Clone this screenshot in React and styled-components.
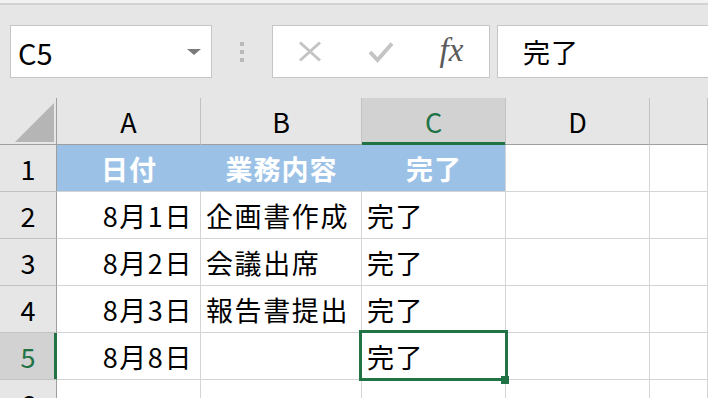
import React from "react";
import styled, { createGlobalStyle, css } from "styled-components";

const Global = createGlobalStyle`
  html, body { margin: 0; padding: 0; background: #e6e6e6; overflow: hidden; }
  body { font-family: "Noto Sans CJK JP", "Noto Sans", sans-serif; }
  * { box-sizing: border-box; }
`;

const GREEN = "#217346";

const Page = styled.div`
  width: 708px;
  height: 398px;
  overflow: hidden;
  display: flex;
  flex-direction: column;
  background: #e6e6e6;
`;

const TopStrip = styled.div`
  height: 5px;
  flex: none;
  background: #f2f2f2;
  border-bottom: 2px solid #d2d2d2;
`;

const Toolbar = styled.div`
  flex: none;
  height: 93px;
  padding-top: 20px;
  display: flex;
  align-items: flex-start;
  background: #e6e6e6;
`;

const NameBox = styled.div`
  margin-left: 10px;
  width: 202px;
  height: 53px;
  background: #fff;
  border: 1px solid #c6c6c6;
  display: flex;
  align-items: center;
  justify-content: space-between;
  padding: 0 10px 0 7px;
  font-size: 29px;
  color: #000;
`;

const Caret = styled.span`
  width: 0;
  height: 0;
  border-left: 7px solid transparent;
  border-right: 7px solid transparent;
  border-top: 6px solid #7b7b7b;
  margin-top: 1px;
`;

const Grip = styled.div`
  width: 60px;
  height: 53px;
  display: flex;
  flex-direction: column;
  align-items: center;
  justify-content: center;
  gap: 4px;
`;

const Dot = styled.span`
  width: 4px;
  height: 4px;
  background: #b9b9b9;
`;

const FxBox = styled.div`
  width: 218px;
  height: 53px;
  background: #fff;
  border: 1px solid #c6c6c6;
  display: flex;
  padding-left: 1px;
`;

const FxSlot = styled.div`
  width: 71px;
  display: flex;
  align-items: center;
  justify-content: center;
`;

const FxText = styled.span`
  font-family: "Liberation Serif", "DejaVu Serif", serif;
  font-style: italic;
  font-size: 33px;
  color: #5a5a5a;
  margin-top: -3px;
`;

const FormulaBar = styled.div`
  margin-left: 7px;
  margin-right: -4px;
  flex: 1;
  height: 53px;
  background: #fff;
  border: 1px solid #c6c6c6;
  display: flex;
  align-items: center;
  padding-left: 25px;
  font-size: 27px;
  letter-spacing: 1px;
  color: #000;
`;

const GridWrap = styled.div`
  position: relative;
  flex: 1;
  background: #fff;
`;

const Grid = styled.div`
  display: grid;
  grid-template-columns: 57px 144px 161px 144px 144px 1fr;
  grid-template-rows: 47px;
  grid-auto-rows: 47px;
  font-size: 27px;
`;

const Cell = styled.div`
  background: ${(p) => (p.$head ? "#9bc2e6" : "#fff")};
  color: ${(p) => (p.$head ? "#fff" : "#000")};
  font-weight: ${(p) => (p.$head ? 700 : 400)};
  letter-spacing: ${(p) => (p.$head ? "1px" : "1.6px")};
  border-right: 1px solid ${(p) => (p.$head ? "#9bc2e6" : "#d4d4d4")};
  border-bottom: 1px solid #d4d4d4;
  display: flex;
  align-items: center;
  white-space: nowrap;
  overflow: hidden;
  justify-content: ${(p) =>
    p.$align === "right" ? "flex-end" : p.$align === "center" ? "center" : "flex-start"};
  padding: ${(p) =>
    p.$align === "right" ? "0 7px 0 0" : p.$align === "center" ? "0 0 0 1px" : "0 0 0 5px"};
  ${(p) =>
    p.$headLast &&
    css`
      border-right-color: #d4d4d4;
    `}
`;

const ColHead = styled.div`
  background: ${(p) => (p.$sel ? "#d2d2d2" : "#e6e6e6")};
  color: ${(p) => (p.$sel ? GREEN : "#000")};
  border-right: 1px solid #c2c2c2;
  border-bottom: 1px solid ${(p) => (p.$sel ? GREEN : "#9f9f9f")};
  box-shadow: ${(p) => (p.$sel ? `inset 0 -2px 0 ${GREEN}` : "none")};
  display: flex;
  align-items: center;
  justify-content: center;
  padding-top: 1px;
`;

const RowHead = styled.div`
  background: ${(p) => (p.$sel ? "#d2d2d2" : "#e6e6e6")};
  color: ${(p) => (p.$sel ? GREEN : "#000")};
  border-right: 1px solid ${(p) => (p.$sel ? GREEN : "#9f9f9f")};
  border-bottom: 1px solid #c2c2c2;
  box-shadow: ${(p) => (p.$sel ? `inset -2px 0 0 ${GREEN}` : "none")};
  display: flex;
  align-items: center;
  justify-content: center;
`;

const Corner = styled.div`
  background: #e6e6e6;
  border-right: 1px solid #9f9f9f;
  border-bottom: 1px solid #9f9f9f;
  display: flex;
  align-items: flex-end;
  justify-content: flex-end;
  padding: 0 2px 2px 0;
`;

const Selection = styled.div`
  position: absolute;
  left: 359px;
  top: 232px;
  width: 149px;
  height: 51px;
  border: 3px solid ${GREEN};
  pointer-events: none;
`;

const Handle = styled.span`
  position: absolute;
  right: -4px;
  bottom: -6px;
  width: 8px;
  height: 8px;
  background: ${GREEN};
`;

const cols = ["A", "B", "C", "D", ""];

const rows = [
  { n: 1, head: true, a: "日付", b: "業務内容", c: "完了" },
  { n: 2, a: "8月1日", b: "企画書作成", c: "完了" },
  { n: 3, a: "8月2日", b: "会議出席", c: "完了" },
  { n: 4, a: "8月3日", b: "報告書提出", c: "完了" },
  { n: 5, a: "8月8日", b: "", c: "完了", sel: true },
  { n: 6, a: "", b: "", c: "" },
];

export default function App() {
  return (
    <Page>
      <Global />
      <TopStrip />
      <Toolbar>
        <NameBox>
          <span>C5</span>
          <Caret />
        </NameBox>
        <Grip>
          <Dot />
          <Dot />
          <Dot />
        </Grip>
        <FxBox>
          <FxSlot>
            <svg width="24" height="21" viewBox="0 0 24 21">
              <path d="M2 1.5 L22 19.5 M22 1.5 L2 19.5" stroke="#c4c4c4" strokeWidth="3" fill="none" />
            </svg>
          </FxSlot>
          <FxSlot>
            <svg width="26" height="22" viewBox="0 0 26 22">
              <path d="M2 11 L9.5 19 L24 2.5" stroke="#c4c4c4" strokeWidth="4" fill="none" strokeLinejoin="miter" />
            </svg>
          </FxSlot>
          <FxSlot>
            <FxText>fx</FxText>
          </FxSlot>
        </FxBox>
        <FormulaBar>完了</FormulaBar>
      </Toolbar>
      <GridWrap>
        <Grid>
          <Corner>
            <svg width="39" height="39" viewBox="0 0 39 39">
              <polygon points="39,0 39,39 0,39" fill="#b5b5b5" />
            </svg>
          </Corner>
          {cols.map((c, i) => (
            <ColHead key={i} $sel={c === "C"}>
              {c}
            </ColHead>
          ))}
          {rows.map((r) => (
            <React.Fragment key={r.n}>
              <RowHead $sel={r.sel}>{r.n}</RowHead>
              <Cell $head={r.head} $align={r.head ? "center" : "right"}>
                {r.a}
              </Cell>
              <Cell $head={r.head} $align={r.head ? "center" : "left"}>
                {r.b}
              </Cell>
              <Cell $head={r.head} $headLast={r.head} $align={r.head ? "center" : "left"}>
                {r.c}
              </Cell>
              <Cell />
              <Cell />
            </React.Fragment>
          ))}
        </Grid>
        <Selection>
          <Handle />
        </Selection>
      </GridWrap>
    </Page>
  );
}
